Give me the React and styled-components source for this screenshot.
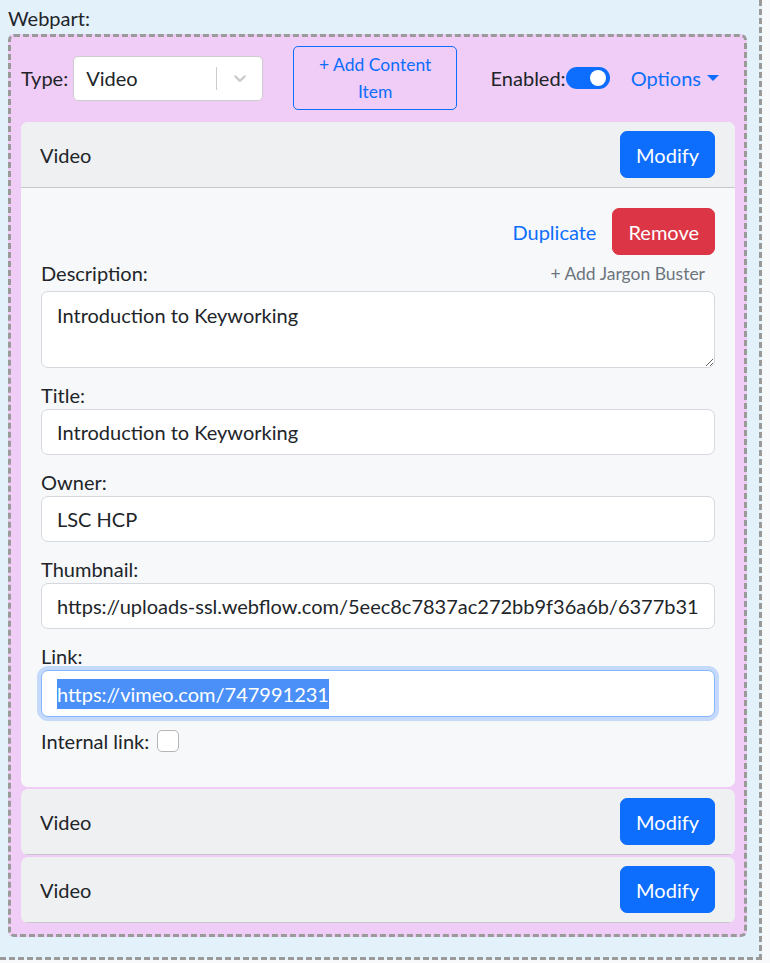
import React from "react";
import styled, { createGlobalStyle } from "styled-components";

const Global = createGlobalStyle`
  html, body { margin: 0; padding: 0; background: #f8f9fa; }
  body { font-family: Lato, "Noto Sans", sans-serif; color: #212529; font-size: 20px; }
  * { box-sizing: border-box; }
`;

const Outer = styled.div`
  width: 762px;
  background: #e3f1fb;
  border-right: 3px dashed #9a9a9a;
  border-bottom: 3px dashed #9a9a9a;
  padding: 3px 12px 20px 8px;
`;

const Caption = styled.div`
  line-height: 31px;
`;

const Webpart = styled.div`
  background: #f0cdf6;
  border: 3px dashed #9a9a9a;
  border-radius: 6px;
  padding: 9px 9px 11px 10px;
`;

const TopRow = styled.div`
  display: flex;
  align-items: center;
  margin-bottom: 12px;
`;

const Label = styled.span`
  line-height: 30px;
`;

const Select = styled.div`
  margin-left: 5px;
  width: 190px;
  height: 45px;
  background: #fff;
  border: 1px solid #cccccc;
  border-radius: 5px;
  display: flex;
  align-items: center;
`;

const SelectValue = styled.div`
  flex: 1;
  padding-left: 12px;
`;

const SelectSep = styled.span`
  width: 1px;
  align-self: stretch;
  margin: 10px 0;
  background: #cccccc;
`;

const SelectIndicator = styled.span`
  display: flex;
  padding: 0 12px 0 13px;
  color: #cccccc;
`;

const OutlineButton = styled.button`
  margin-left: 30px;
  width: 164px;
  height: 64px;
  background: transparent;
  border: 1px solid #0d6efd;
  border-radius: 5px;
  color: #0d6efd;
  font: inherit;
  font-size: 17.5px;
  line-height: 26.5px;
  padding: 5px 10px;
`;

const Spacer = styled.div`
  flex: 1;
`;

const Switch = styled.span`
  width: 44px;
  height: 22px;
  border-radius: 11px;
  background: #0d6efd;
  display: flex;
  align-items: center;
  justify-content: flex-end;
  padding-right: 4px;
  &::after {
    content: "";
    width: 16px;
    height: 16px;
    border-radius: 50%;
    background: #fff;
  }
`;

const LinkButton = styled.button`
  background: transparent;
  border: 1px solid transparent;
  color: #0d6efd;
  font: inherit;
  padding: 7.5px 15px;
  margin-left: ${(p) => p.$ml || 0}px;
  line-height: 30px;
  display: inline-flex;
  align-items: center;
`;

const Caret = styled.span`
  margin-left: 6px;
  border-top: 6px solid #0d6efd;
  border-left: 6px solid transparent;
  border-right: 6px solid transparent;
`;

const Card = styled.div`
  background: #f7f8fa;
  border-radius: 7px;
  overflow: hidden;
  & + & { margin-top: 2px; }
`;

const CardHeader = styled.div`
  background: #eff0f2;
  border-bottom: 1px solid #c6c7ca;
  padding: 9px 20px 9px 19px;
  display: flex;
  align-items: center;
  justify-content: space-between;
`;

const Button = styled.button`
  font: inherit;
  color: #fff;
  background: ${(p) => (p.$danger ? "#dc3545" : "#0d6efd")};
  border: 1px solid ${(p) => (p.$danger ? "#dc3545" : "#0d6efd")};
  border-radius: 7px;
  padding: 7.5px 15px;
  line-height: 30px;
  height: 47px;
  min-width: ${(p) => p.$w || 0}px;
`;

const CardBody = styled.div`
  padding: 20px 20px 34px 20px;
`;

const Actions = styled.div`
  display: flex;
  justify-content: flex-end;
  align-items: center;
`;

const LabelRow = styled.div`
  height: 36px;
  display: flex;
  align-items: center;
  justify-content: space-between;
`;

const Jargon = styled.span`
  font-size: 17.5px;
  color: #6c757d;
  margin-right: 10px;
`;

const FieldLabel = styled.label`
  display: block;
  line-height: 28px;
  margin-top: 13px;
`;

const Input = styled.input`
  display: block;
  width: 100%;
  height: 46px;
  font: inherit;
  color: #212529;
  background: #fff;
  border: 1px solid #d5d8dc;
  border-radius: 7px;
  padding: 7px 15px;
  line-height: 30px;
  outline: none;
`;

const TextArea = styled.textarea`
  display: block;
  width: 100%;
  height: 77px;
  font: inherit;
  color: #212529;
  background: #fff;
  border: 1px solid #d5d8dc;
  border-radius: 7px;
  padding: 7.5px 15px;
  line-height: 30px;
  outline: none;
`;

const FocusedInput = styled.div`
  height: 47px;
  background: #fff;
  border: 1px solid #86b7fe;
  border-radius: 7px;
  box-shadow: 0 0 0 4px #c5d9fb;
  padding: 0 15px;
  display: flex;
  align-items: center;
`;

const Selected = styled.span`
  background: #4a90f8;
  color: #fff;
  line-height: 30px;
`;

const CheckRow = styled.div`
  display: flex;
  align-items: center;
  gap: 8px;
  margin-top: 12px;
`;

const Check = styled.span`
  width: 22px;
  height: 22px;
  background: #fff;
  border: 1px solid #b5b5b5;
  border-radius: 5px;
`;

const Chevron = () => (
  <svg width="20" height="20" viewBox="0 0 20 20" fill="currentColor">
    <path d="M4.516 7.548c0.436-0.446 1.043-0.481 1.576 0l3.908 3.747 3.908-3.747c0.533-0.481 1.141-0.446 1.574 0 0.436 0.445 0.408 1.197 0 1.615-0.406 0.418-4.695 4.502-4.695 4.502-0.217 0.223-0.502 0.335-0.787 0.335s-0.57-0.112-0.789-0.335c0 0-4.287-4.084-4.695-4.502s-0.436-1.170 0-1.615z" />
  </svg>
);

const Collapsed = () => (
  <Card>
    <CardHeader>
      <span>Video</span>
      <Button $w={94}>Modify</Button>
    </CardHeader>
  </Card>
);

export default function App() {
  return (
    <>
      <Global />
      <Outer>
        <Caption>Webpart:</Caption>
        <Webpart>
          <TopRow>
            <Label>Type:</Label>
            <Select>
              <SelectValue>Video</SelectValue>
              <SelectSep />
              <SelectIndicator>
                <Chevron />
              </SelectIndicator>
            </Select>
            <OutlineButton>+ Add Content Item</OutlineButton>
            <Spacer />
            <Label>Enabled:</Label>
            <Switch />
            <LinkButton $ml={5}>
              Options
              <Caret />
            </LinkButton>
          </TopRow>

          <Card>
            <CardHeader>
              <span>Video</span>
              <Button $w={94}>Modify</Button>
            </CardHeader>
            <CardBody>
              <Actions>
                <LinkButton>Duplicate</LinkButton>
                <Button $danger $w={102}>Remove</Button>
              </Actions>
              <LabelRow>
                <span>Description:</span>
                <Jargon>+ Add Jargon Buster</Jargon>
              </LabelRow>
              <TextArea rows={2} defaultValue="Introduction to Keyworking" />
              <FieldLabel>Title:</FieldLabel>
              <Input defaultValue="Introduction to Keyworking" />
              <FieldLabel>Owner:</FieldLabel>
              <Input defaultValue="LSC HCP" />
              <FieldLabel>Thumbnail:</FieldLabel>
              <Input defaultValue="https://uploads-ssl.webflow.com/5eec8c7837ac272bb9f36a6b/6377b31d8a1c2e3f4b5a6c7d_thumbnail.jpg" />
              <FieldLabel>Link:</FieldLabel>
              <FocusedInput>
                <Selected>https://vimeo.com/747991231</Selected>
              </FocusedInput>
              <CheckRow>
                <span>Internal link:</span>
                <Check />
              </CheckRow>
            </CardBody>
          </Card>
          <Collapsed />
          <Collapsed />
        </Webpart>
      </Outer>
    </>
  );
}
